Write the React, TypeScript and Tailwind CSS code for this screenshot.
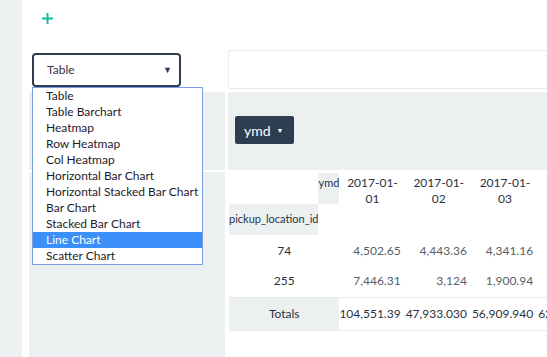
const renderers = [
  'Table',
  'Table Barchart',
  'Heatmap',
  'Row Heatmap',
  'Col Heatmap',
  'Horizontal Bar Chart',
  'Horizontal Stacked Bar Chart',
  'Bar Chart',
  'Stacked Bar Chart',
  'Line Chart',
  'Scatter Chart',
]

const cols = [
  { a: '2017-01-', b: '01' },
  { a: '2017-01-', b: '02' },
  { a: '2017-01-', b: '03' },
  { a: '2017-01-', b: '04' },
]

const rows = [
  { key: '74', vals: ['4,502.65', '4,443.36', '4,341.16', '4,118.27'] },
  { key: '255', vals: ['7,446.31', '3,124', '1,900.94', '10,322.48'] },
]

const totals = ['104,551.39', '47,933.030', '56,909.940', '62,460.1950']

export default function App() {
  return (
    <div className="flex h-[357px] overflow-hidden bg-white font-['Lato','Noto_Sans',sans-serif]">
      {/* left rail */}
      <div className="w-[22px] shrink-0 bg-[#ecf0f1]" />

      <div className="flex min-w-0 flex-1 flex-col pl-[7px]">
        {/* add button */}
        <div className="h-[46px] shrink-0 pl-[13px] pt-[13px]">
          <svg width="11" height="11" viewBox="0 0 11 11" className="text-[#1abc9c]">
            <path d="M5.5 0v11M0 5.5h11" stroke="currentColor" strokeWidth="2" />
          </svg>
        </div>

        <div className="grid min-h-0 flex-1 grid-cols-[196px_1fr] grid-rows-[46px_78px_1fr] gap-x-[3px]">
          {/* renderer select */}
          <div className="relative z-10 pl-[3px] pt-[7px]">
            <div className="flex h-[34px] w-[149px] items-center justify-between rounded-[4px] border-2 border-[#2c3e50] bg-white pl-[13px] pr-[7px] text-[12px] text-[#3a3147]">
              <span>Table</span>
              <span className="text-[9px] text-[#2c3e50]">▼</span>
            </div>
            <ul className="absolute left-[3px] top-[41px] w-[171px] border border-[#7b9fe0] bg-white text-[12px] leading-[16px] text-[#1e1a2e]">
              {renderers.map(r => (
                <li
                  key={r}
                  className={
                    r === 'Line Chart'
                      ? 'h-[16px] bg-[#3a8ff9] pl-[13px] text-white'
                      : 'h-[16px] pl-[13px]'
                  }
                >
                  {r}
                </li>
              ))}
            </ul>
          </div>

          {/* unused attributes */}
          <div className="pt-[4px]">
            <div className="h-[39px] rounded-l-[2px] border border-r-0 border-[#ebebeb]" />
          </div>

          {/* aggregator cell */}
          <div className="bg-[#ecf0f1]" />

          {/* column attributes */}
          <div className="bg-[#ecf0f1] pl-[7px] pt-[24px]">
            <button className="flex h-[28px] w-[59px] items-center gap-[6px] rounded-[2px] bg-[#2c3e50] pl-[9px] text-[14px] text-white">
              ymd
              <span className="text-[7px]">▼</span>
            </button>
          </div>

          {/* row attributes */}
          <div className="mt-[2px] bg-[#ecf0f1]" />

          {/* output */}
          <div className="mt-[2px] min-w-0 overflow-hidden pl-[1px] pt-[1px]">
            <table className="table-fixed border-collapse text-[12px]">
              <colgroup>
                <col className="w-[89px]" />
                <col className="w-[21px]" />
                <col className="w-[65px]" />
                <col className="w-[65px]" />
                <col className="w-[65px]" />
                <col className="w-[65px]" />
              </colgroup>
              <thead>
                <tr className="h-[31px]">
                  <th />
                  <th className="bg-[#ecf0f1] pt-[2px] align-top text-[11px] font-normal text-[#2a3241]">ymd</th>
                  {cols.map((c, i) => (
                    <th key={i} rowSpan={2} className="pt-[2px] align-top font-normal leading-[16px] text-[#2a3241]">
                      {c.a}
                      <br />
                      {c.b}
                    </th>
                  ))}
                </tr>
                <tr className="h-[31px]">
                  <th className="whitespace-nowrap bg-[#ecf0f1] text-left text-[11px] font-normal text-[#2a3241]">
                    pickup_location_id
                  </th>
                  <th />
                </tr>
              </thead>
              <tbody>
                {rows.map(r => (
                  <tr key={r.key} className="h-[31px]">
                    <th colSpan={2} className="font-normal text-[#2a3241]">{r.key}</th>
                    {r.vals.map((v, i) => (
                      <td key={i} className="pr-[5px] text-right text-[#5a5e66]">{v}</td>
                    ))}
                  </tr>
                ))}
                <tr className="h-[33px] border-y border-[#ebebeb]">
                  <th colSpan={2} className="bg-[#ecf0f1] font-normal text-[#2a3241]">Totals</th>
                  {totals.map((v, i) => (
                    <td key={i} className="whitespace-nowrap pr-[5px] text-right text-[#2a3241]">{v}</td>
                  ))}
                </tr>
              </tbody>
            </table>
          </div>
        </div>
      </div>
    </div>
  )
}
